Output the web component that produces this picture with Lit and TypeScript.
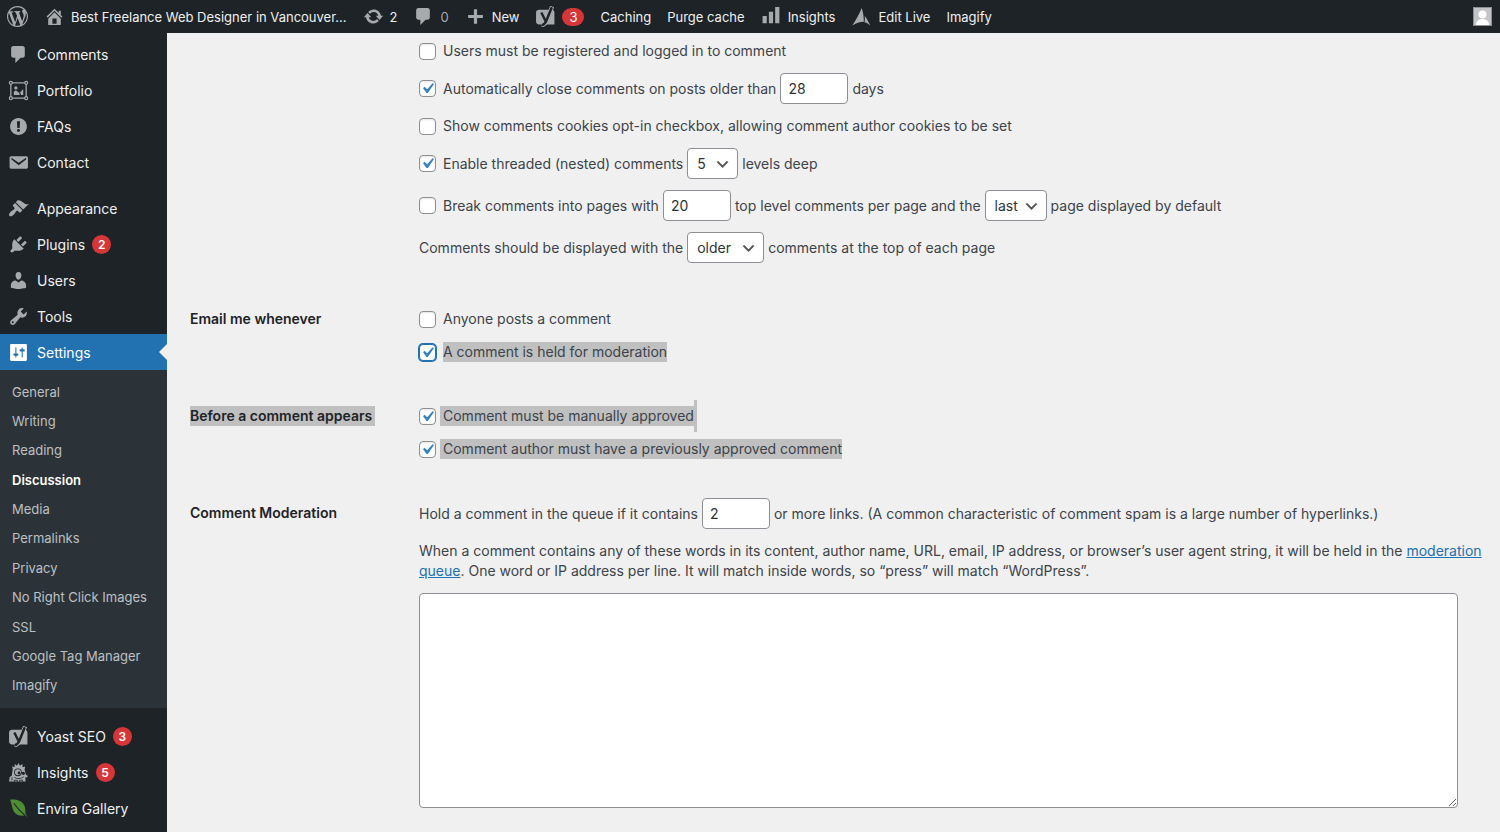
import { LitElement, html, css, svg, nothing, TemplateResult } from "lit";
import { customElement } from "lit/decorators.js";
import { classMap } from "lit/directives/class-map.js";

const p = (d: string) => svg`<path fill-rule="evenodd" d=${d}></path>`;

const glyphs: Record<string, unknown> = {
  wordpress: p("M20 10c0-5.51-4.49-10-10-10C4.48 0 0 4.49 0 10c0 5.52 4.48 10 10 10 5.51 0 10-4.48 10-10zM7.78 15.37L4.37 6.22c.55-.02 1.17-.08 1.17-.08.5-.06.44-1.13-.06-1.11 0 0-1.45.11-2.37.11-.18 0-.37 0-.58-.01C4.12 2.69 6.87 1.11 10 1.11c2.33 0 4.45.87 6.05 2.34-.68-.11-1.65.39-1.65 1.58 0 .74.45 1.36.9 2.1.35.61.55 1.36.55 2.46 0 1.49-1.4 5-1.4 5l-3.03-8.37c.54-.02.82-.17.82-.17.5-.05.44-1.25-.06-1.22 0 0-1.44.12-2.38.12-.87 0-2.33-.12-2.33-.12-.5-.03-.56 1.2-.06 1.22l.92.08 1.26 3.41zM17.41 10c.24-.64.74-1.87.43-4.25.7 1.29 1.05 2.71 1.05 4.25 0 3.29-1.73 6.24-4.4 7.78.97-2.59 1.94-5.2 2.92-7.78zM6.1 18.09C3.12 16.65 1.11 13.53 1.11 10c0-1.3.23-2.48.72-3.59C3.25 10.3 4.67 14.2 6.1 18.09zm4.03-6.63l2.58 6.98c-.86.29-1.76.45-2.71.45-.79 0-1.57-.11-2.29-.33.81-2.38 1.62-4.74 2.42-7.1z"),
  home: p("M16 8.5l1.53 1.53-1.06 1.06L10 4.6l-6.47 6.49-1.06-1.06L10 2.5l4 4v-2h2v4zm-6-2.46l6 5.99V18H4v-5.97zM12 17v-5H8v5h4z"),
  update: p("M10.2 3.28c3.53 0 6.43 2.61 6.92 6h2.08l-3.5 4-3.5-4h2.32c-.45-1.97-2.21-3.45-4.32-3.45-1.45 0-2.73.71-3.54 1.78L4.95 5.66C6.23 4.2 8.11 3.28 10.2 3.28zm-.4 13.44c-3.52 0-6.43-2.61-6.92-6H.8l3.5-4c1.17 1.33 2.33 2.67 3.5 4H5.48c.45 1.97 2.21 3.45 4.32 3.45 1.45 0 2.73-.71 3.54-1.78l1.71 1.95c-1.28 1.46-3.15 2.38-5.25 2.38z"),
  comment: p("M5 2h9q0.82 0 1.41 0.59t0.59 1.41v7q0 0.82-0.59 1.41t-1.41 0.59h-2l-5 5v-5h-2q-0.82 0-1.41-0.59t-0.59-1.41v-7q0-0.82 0.59-1.41t1.41-0.59z"),
  plus: p("M17 8.5v3h-5.5V17h-3v-5.5H3v-3h5.5V3h3v5.5z"),
  appearance: p("M14.48 11.06L7.41 3.99l1.5-1.5c.5-.56 2.3-.47 3.51.32 1.21.8 1.43 1.28 2.91 2.1 1.18.64 2.45 1.26 4.45.85zm-.71.71L6.7 4.7 4.93 6.47c-.39.39-.39 1.02 0 1.41l1.06 1.06c.39.39.39 1.03 0 1.42-.6.6-1.43 1.11-2.21 1.69-.35.26-.7.53-1.01.84C1.43 14.23.4 16.08 1.4 17.07c.99 1 2.84-.03 4.18-1.36.31-.31.58-.66.85-1.02.57-.78 1.08-1.61 1.69-2.21.39-.39 1.02-.39 1.41 0l1.06 1.06c.39.39 1.02.39 1.41 0z"),
  plugins: p("M13.11 4.36L9.87 7.6 8 5.73l3.24-3.24c.35-.34 1.05-.2 1.56.32.52.51.66 1.21.31 1.55zm-8 1.77l.91-1.12 9.01 9.01-1.19.84c-.71.71-2.63 1.16-3.82 1.16H6.14L4.9 17.26c-.59.59-1.54.59-2.12 0-.59-.58-.59-1.53 0-2.12l1.24-1.24v-3.88c0-1.13.4-3.19 1.09-3.89zm7.26 3.97l3.24-3.24c.34-.35 1.04-.21 1.55.31.52.51.66 1.21.31 1.55l-3.24 3.25z"),
  users: p("M10 9.25c-2.27 0-2.73-3.44-2.73-3.44C7 4.02 7.82 2 9.97 2c2.16 0 2.98 2.02 2.71 3.81 0 0-.41 3.44-2.68 3.44zm0 2.57L12.72 10c2.39 0 4.52 2.33 4.52 4.53v2.49s-3.65 1.13-7.24 1.13c-3.65 0-7.24-1.13-7.24-1.13v-2.49c0-2.25 1.94-4.48 4.47-4.48z"),
  tools: p("M16.68 9.77c-1.34 1.34-3.3 1.67-4.95.99l-5.41 6.52c-.99.99-2.59.99-3.58 0s-.99-2.59 0-3.57l6.52-5.42c-.68-1.65-.35-3.61.99-4.95 1.28-1.28 3.12-1.62 4.72-1.06l-2.89 2.89 2.82 2.82 2.86-2.87c.53 1.58.18 3.39-1.08 4.65zM3.81 16.21c.4.39 1.04.39 1.43 0 .4-.4.4-1.04 0-1.43-.39-.4-1.03-.4-1.43 0-.39.39-.39 1.03 0 1.43z"),
  settings: p("M18 17V3c0-.55-.45-1-1-1H3c-.55 0-1 .45-1 1v14c0 .55.45 1 1 1h14c.55 0 1-.45 1-1zM8 11h1c.55 0 1 .45 1 1s-.45 1-1 1H8v1.5c0 .28-.22.5-.5.5s-.5-.22-.5-.5V13H6c-.55 0-1-.45-1-1s.45-1 1-1h1V5.5c0-.28.22-.5.5-.5s.5.22.5.5V11zm5-2h-1c-.55 0-1-.45-1-1s.45-1 1-1h1V5.5c0-.28.22-.5.5-.5s.5.22.5.5V7h1c.55 0 1 .45 1 1s-.45 1-1 1h-1v5.5c0 .28-.22.5-.5.5s-.5-.22-.5-.5V9z"),
  faqs: p("M10 2c4.42 0 8 3.58 8 8s-3.58 8-8 8-8-3.58-8-8 3.58-8 8-8zm1.13 9.38l.35-6.46H8.52l.35 6.46h2.26zm-.09 3.36c.24-.23.37-.55.37-.96 0-.42-.12-.74-.36-.97s-.59-.35-1.06-.35-.82.12-1.07.35-.37.55-.37.97c0 .41.13.73.38.96.26.23.61.34 1.06.34s.8-.11 1.05-.34z"),
  contact: p("M3 4h14.5c.8 0 1.5.7 1.5 1.5v9c0 .8-.7 1.5-1.5 1.5H3c-.8 0-1.5-.7-1.5-1.5v-9C1.5 4.7 2.2 4 3 4zM3.3 5.5v1.7l6.900 5.300 7-5.300V5.500l-7 4.700z"),
  portfolio: svg`
    <g fill="none" stroke="currentColor" stroke-width="1.2">
      <path d="M4 2.7h12M4 17.3h12M2.7 4v12M17.3 4v12"></path>
      <circle cx="2.7" cy="2.7" r="1.4"></circle><circle cx="17.3" cy="2.7" r="1.4"></circle>
      <circle cx="2.7" cy="17.3" r="1.4"></circle><circle cx="17.3" cy="17.3" r="1.4"></circle>
    </g>
    <circle cx="7.5" cy="7.5" r="1.6"></circle>
    <path d="M5.5 14.3v-3l2-1.500 2.500 2 .5-.3.7 2.800zM11.500 12l3-3.500v5.800h-2z"></path>`,
  yoast: svg`
    <path d="M4 3.5h11.5A3 3 0 0 1 18.500 6.500V17.500H4a3 3 0 0 1-3-3v-8a3 3 0 0 1 3-3z"></path>
    <path fill="none" stroke="currentColor" stroke-width="4" d="M16.300.5L11 14q-1.500 4-4.800 4.300"></path>
    <path fill="none" stroke="#1d2327" stroke-width="2.3" d="M16 1.200L10.800 14q-1.500 3.800-4.500 4.200M6 6.200l4.300 8.600"></path>`,
  bars: p("M1.500 9.500h4v7h-4zM7.500 5.500h4v11h-4zM13.500 1h4v15.500h-4z"),
  sail: p("M10.2 1.8c1.3 4 2.2 9 2 13.2-3.2 0-6.7 1-11 3.6C4.5 13.5 8 7.5 10.2 1.8zM13.1 9.5c2 2.5 3.8 5.7 5.2 9.1-1.5-1.5-3.3-2.6-5.4-3.2.4-2 .4-3.9.2-5.9z"),
  monster: svg`
    <path d="M4.500 7l-.6-3 2.300 1L6.500 2l2 1.600L10 1l1.400 2.500L13.700 2l.2 3 2.500-.6-.6 3 1.200 4.600 2 1.300-1.200 1.500-1.400-.2.4 4H1l.6-4.200 2-1.300z"></path>
    <circle cx="9.5" cy="9.8" r="3.7" fill="#1d2327"></circle>
    <circle cx="9.5" cy="9.8" r="2.9"></circle>
    <circle cx="10.5" cy="10.4" r="1.4" fill="#1d2327"></circle>
    <circle cx="14.6" cy="10.8" r="1.5" fill="#1d2327"></circle>
    <path fill="none" stroke="#1d2327" stroke-width=".8" d="M6 14.500c2.500 1.800 6.500 1.800 9-.5M3.800 14.500v3M6 18.600v-1.200h3v1.200M11 18.600v-1.200h3v1.200"></path>`,
  leaf: svg`
    <path fill="#4f8c33" d="M2 1.500c6-.5 11.500 1 13.500 5.500 1.500 3.500.7 6 1.200 8l1.800 3.200-2.200-1.700c-3.500.8-7.800.3-10.300-3C3.500 10.200 3.800 6 2 1.500z"></path>
    <path fill="none" stroke="#1d2327" stroke-width="1" d="M5.500 5c3 4.500 6.500 8 11 11.700"></path>`,
};

const icon = (name: string) =>
  html`<svg class="icon" viewBox="0 0 20 20" aria-hidden="true">${glyphs[name]}</svg>`;

interface BarItem { icon?: string; text?: string; badge?: string; label?: string; cls?: string }
interface MenuItem { icon: string; text: string; badge?: string; current?: boolean }

const barItems: BarItem[] = [
  { icon: "wordpress", label: "About WordPress" },
  { icon: "home", text: "Best Freelance Web Designer in Vancouver..." },
  { icon: "update", text: "2" },
  { icon: "comment", text: "0", cls: "muted" },
  { icon: "plus", text: "New" },
  { icon: "yoast", badge: "3", label: "Yoast SEO" },
  { text: "Caching" },
  { text: "Purge cache" },
  { icon: "bars", text: "Insights" },
  { icon: "sail", text: "Edit Live" },
  { text: "Imagify" },
];

const menu: MenuItem[][] = [
  [
    { icon: "comment", text: "Comments" },
    { icon: "portfolio", text: "Portfolio" },
    { icon: "faqs", text: "FAQs" },
    { icon: "contact", text: "Contact" },
  ],
  [
    { icon: "appearance", text: "Appearance" },
    { icon: "plugins", text: "Plugins", badge: "2" },
    { icon: "users", text: "Users" },
    { icon: "tools", text: "Tools" },
    { icon: "settings", text: "Settings", current: true },
  ],
  [
    { icon: "yoast", text: "Yoast SEO", badge: "3" },
    { icon: "monster", text: "Insights", badge: "5" },
    { icon: "leaf", text: "Envira Gallery" },
  ],
];

const submenu = [
  "General", "Writing", "Reading", "Discussion", "Media", "Permalinks", "Privacy",
  "No Right Click Images", "SSL", "Google Tag Manager", "Imagify",
];

@customElement("admin-bar")
export class AdminBar extends LitElement {
  static styles = css`
    :host { display: block; background: #1d2327; color: #f0f0f1; font-size: 13px; }
    .bar { display: flex; align-items: center; height: 33px; padding: 0 8px 0 7px; }
    .items { display: flex; align-items: center; flex: 1; gap: 16px; }
    a { display: flex; align-items: center; gap: 6px; color: inherit; text-decoration: none; white-space: nowrap; }
    .icon { width: 21px; height: 21px; fill: currentColor; color: #a7aaad; flex: none; }
    .muted { color: #a7aaad; }
    .badge { min-width: 8px; padding: 0 7px; border-radius: 9px; background: #d63638; color: #fff; line-height: 18px; text-align: center; }
    .avatar { width: 17px; height: 17px; border: 1px solid #8c8f94; background: #c3c4c7; display: block; }
  `;
  render() {
    return html`<nav class="bar" aria-label="Toolbar">
      <div class="items">
        ${barItems.map((i) => html`<a href="#" class=${i.cls ?? ""} aria-label=${i.label ?? nothing}>
          ${i.icon ? icon(i.icon) : nothing}${i.text ? html`<span>${i.text}</span>` : nothing}${i.badge ? html`<span class="badge">${i.badge}</span>` : nothing}
        </a>`)}
      </div>
      <a href="#" aria-label="My account">
        <svg class="avatar" viewBox="0 0 17 17"><circle cx="8.5" cy="6.5" r="4" fill="#fff"></circle><path fill="#fff" d="M2 17c0-4 3-6 6.500-6s6.500 2 6.500 6z"></path></svg>
      </a>
    </nav>`;
  }
}

@customElement("admin-menu")
export class AdminMenu extends LitElement {
  static styles = css`
    :host { display: block; background: #1d2327; color: #f0f0f1; font-size: 14px; }
    ul { list-style: none; margin: 0; padding: 0; }
    .menu { padding-top: 3px; }
    .group + .group { margin-top: 10px; }
    .item { position: relative; display: flex; align-items: center; height: 36px; padding-left: 8px; gap: 8px; color: inherit; text-decoration: none; white-space: nowrap; }
    .icon { width: 21px; height: 21px; fill: currentColor; color: #a7aaad; flex: none; }
    .current { background: #2271b1; color: #fff; }
    .current .icon { color: #fff; }
    .current::after { content: ""; position: absolute; right: 0; top: 10px; border: 8px solid transparent; border-right-color: #f0f0f1; border-left-width: 0; }
    .badge { width: 19px; border-radius: 10px; margin-left: -1px; background: #d63638; color: #fff; font-size: 12px; font-weight: 600; line-height: 19px; text-align: center; }
    .submenu { display: grid; grid-auto-rows: 1fr; height: 323px; padding: 7px 0 8px; background: #2c3338; font-size: 13px; }
    .sub { display: flex; align-items: center; height: 100%; padding-left: 12px; color: #bcc0c4; text-decoration: none; white-space: nowrap; }
    .here { color: #fff; font-weight: 600; }
  `;
  render() {
    return html`<nav class="menu" aria-label="Main menu">
      ${menu.map((g) => html`<ul class="group">
        ${g.map((m) => html`<li>
          <a href="#" class=${classMap({ item: true, current: !!m.current })}>${icon(m.icon)}<span>${m.text}</span>${m.badge ? html`<span class="badge">${m.badge}</span>` : nothing}</a>
          ${m.current ? html`<ul class="submenu">
            ${submenu.map((s) => html`<li><a href="#" class=${classMap({ sub: true, here: s === "Discussion" })}>${s}</a></li>`)}
          </ul>` : nothing}
        </li>`)}
      </ul>`)}
    </nav>`;
  }
}

@customElement("discussion-form")
export class DiscussionForm extends LitElement {
  static styles = css`
    :host { display: block; color: #3c434a; font-size: 14px; line-height: 20px; }
    form { display: grid; gap: 42px; padding: 7px 42px 24px 23px; }
    .section { display: grid; grid-template-columns: 229px minmax(0, 1fr); }
    .first { padding-bottom: 3px; }
    .title { color: #1d2327; font-weight: 600; line-height: 22px; }
    .rows { display: grid; gap: 11px; min-width: 0; }
    .row { display: flex; align-items: center; gap: 4px; min-height: 22px; white-space: nowrap; }
    .check { display: flex; align-items: center; gap: 7px; }
    .tick { appearance: none; display: grid; place-items: center; box-sizing: border-box; width: 17px; height: 17px; margin: 0; flex: none; border: 1px solid #8c8f94; border-radius: 4px; background: #fff; box-shadow: inset 0 1px 2px rgba(0, 0, 0, 0.1); }
    .tick:checked { background: #fff url("data:image/svg+xml,%3Csvg xmlns='http://www.w3.org/2000/svg' viewBox='0 0 20 20'%3E%3Cpath fill='%233582c4' d='M14.83 4.89l1.34.94-5.81 8.38H9.02L5.78 9.67l1.34-1.25 2.57 2.4z'/%3E%3C/svg%3E") center / 21px no-repeat; }
    .focused { border-color: #2271b1; box-shadow: 0 0 0 1px #2271b1; }
    .field, .select { box-sizing: border-box; height: 31px; border: 1px solid #8c8f94; border-radius: 4px; background: #fff; color: #2c3338; font: inherit; margin: 0; }
    .field { width: 68px; padding: 0 7px; }
    .select { appearance: none; padding: 0 25px 0 9px; background: #fff url("data:image/svg+xml,%3Csvg xmlns='http://www.w3.org/2000/svg' viewBox='0 0 20 20'%3E%3Cpath fill='%23555' d='M5 6l5 5 5-5 2 1-7 7-7-7z'/%3E%3C/svg%3E") right 6px top 55% / 17px no-repeat; }
    .selected { display: inline-block; background: #c0c0c0; line-height: 20px; }
    .lead { margin-left: -3px; padding-left: 3px; }
    .caret { align-self: stretch; width: 3px; margin: -5px 0 -5px -4px; background: #c0c0c0; }
    .heading { padding-right: 3px; }
    .moderation { gap: 12px; margin-top: -4px; }
    .note { display: block; margin-right: -24px; }
    .link { color: #2271b1; }
    .words { box-sizing: border-box; width: 100%; height: 215px; display: block; border: 1px solid #8c8f94; border-radius: 4px; background: #fff; margin: 0; padding: 6px; font: inherit; }
  `;

  private tick(id: string, text: string | TemplateResult, checked = false, focused = false) {
    return html`<label class="check" for=${id}>
      <input id=${id} type="checkbox" class=${classMap({ tick: true, focused })} .checked=${checked} /><span>${text}</span>
    </label>`;
  }

  private select(label: string, options: string[], value: string) {
    return html`<select class="select" aria-label=${label}>
      ${options.map((o) => html`<option ?selected=${o === value}>${o}</option>`)}
    </select>`;
  }

  render() {
    return html`<form>
      <div class="section first" role="group" aria-label="Other comment settings">
        <div></div>
        <div class="rows">
          <div class="row">${this.tick("registered", "Users must be registered and logged in to comment")}</div>
          <div class="row">
            ${this.tick("close", "Automatically close comments on posts older than", true)}
            <input id="days" class="field" type="text" inputmode="numeric" .value=${"28"} />
            <label for="days">days</label>
          </div>
          <div class="row">${this.tick("cookies", "Show comments cookies opt-in checkbox, allowing comment author cookies to be set")}</div>
          <div class="row">
            ${this.tick("threaded", "Enable threaded (nested) comments", true)}
            ${this.select("Levels deep", ["5", "10"], "5")}
            <span>levels deep</span>
          </div>
          <div class="row">
            ${this.tick("pages", "Break comments into pages with")}
            <input id="per-page" class="field" type="text" inputmode="numeric" .value=${"20"} />
            <label for="per-page">top level comments per page and the</label>
            ${this.select("Default page", ["last", "first"], "last")}
            <span>page displayed by default</span>
          </div>
          <div class="row">
            <span>Comments should be displayed with the</span>
            ${this.select("Comment order", ["older", "newer"], "older")}
            <span>comments at the top of each page</span>
          </div>
        </div>
      </div>
      <div class="section" role="group" aria-labelledby="email-title">
        <div class="title" id="email-title">Email me whenever</div>
        <div class="rows">
          <div class="row">${this.tick("posts", "Anyone posts a comment")}</div>
          <div class="row">${this.tick("held", html`<span class="selected">A comment is held for moderation</span>`, true, true)}</div>
        </div>
      </div>
      <div class="section" role="group" aria-labelledby="before-title">
        <div class="title" id="before-title"><span class="selected heading">Before a comment appears</span></div>
        <div class="rows">
          <div class="row">${this.tick("manual", html`<span class="selected lead">Comment must be manually approved</span>`, true)}<span class="caret"></span></div>
          <div class="row">${this.tick("previous", html`<span class="selected lead">Comment author must have a previously approved comment</span>`, true)}</div>
        </div>
      </div>
      <div class="section" role="group" aria-labelledby="moderation-title">
        <div class="title" id="moderation-title">Comment Moderation</div>
        <div class="rows moderation">
          <div class="row">
            <label for="links">Hold a comment in the queue if it contains</label>
            <input id="links" class="field" type="text" inputmode="numeric" .value=${"2"} />
            <span>or more links. (A common characteristic of comment spam is a large number of hyperlinks.)</span>
          </div>
          <label class="note" for="words">When a comment contains any of these words in its content, author name, URL, email, IP address, or browser’s user agent string, it will be held in the <a class="link" href="#">moderation queue</a>. One word or IP address per line. It will match inside words, so “press” will match “WordPress”.</label>
          <textarea id="words" class="words"></textarea>
        </div>
      </div>
    </form>`;
  }
}

@customElement("app-root")
export class AppRoot extends LitElement {
  static styles = css`
    :host { display: flex; flex-direction: column; height: 100vh; overflow: hidden; background: #f0f0f1; font-family: Inter, "Noto Sans", sans-serif; }
    .body { display: grid; grid-template-columns: 167px minmax(0, 1fr); flex: 1; min-height: 0; }
    .side, .content { overflow: hidden; min-height: 0; }
  `;
  render() {
    return html`<admin-bar></admin-bar>
      <div class="body">
        <admin-menu class="side"></admin-menu>
        <main class="content"><discussion-form></discussion-form></main>
      </div>`;
  }
}
